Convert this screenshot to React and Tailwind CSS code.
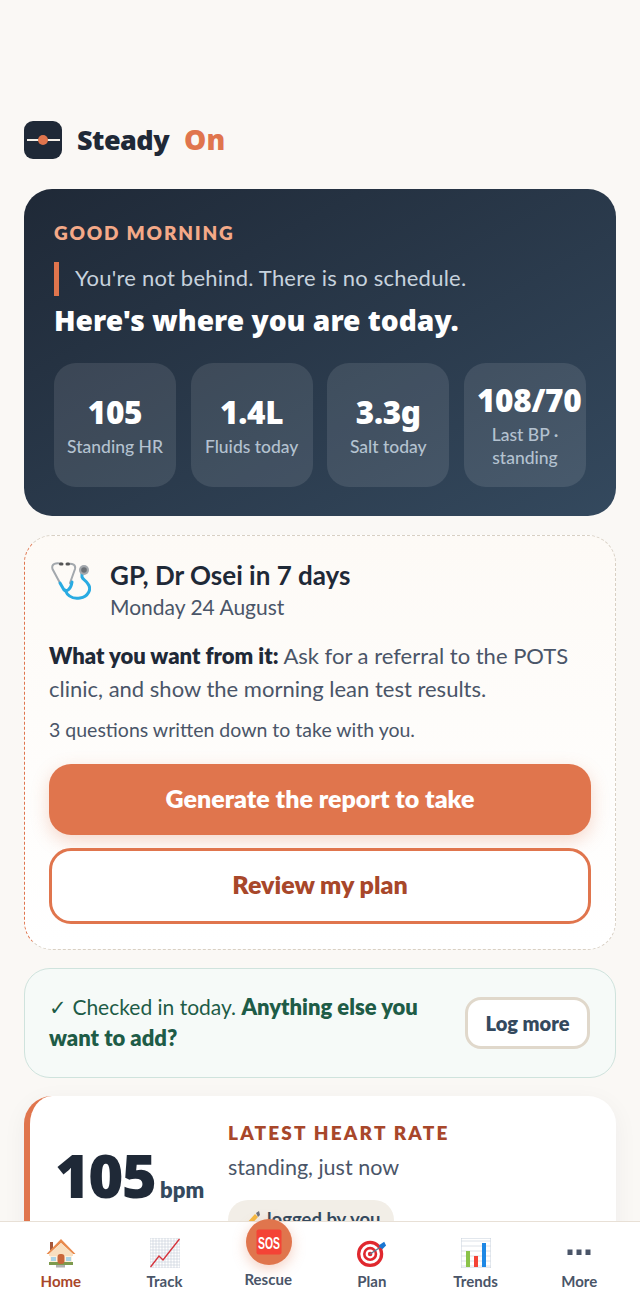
const font = { fontFamily: '"Lato", "Noto Sans", sans-serif' };
const heavy = { fontFamily: '"Noto Sans", "Lato", sans-serif' };

function Stat({ value, label }) {
  return (
    <div className="flex h-[124px] w-[122px] min-w-0 flex-col items-center justify-center rounded-[22px] bg-white/10 px-[13px] text-center">
      <div style={heavy} className="w-full whitespace-nowrap text-left text-[31.5px] font-black leading-[38px] tracking-[-0.01em] text-white">
        <span className="inline-block min-w-full text-center">{value}</span>
      </div>
      <div className="mt-[4px] whitespace-nowrap text-[17.5px] font-medium leading-[23px] text-[#b4c2d0]">{label}</div>
    </div>
  );
}

function Stethoscope() {
  return (
    <svg width="42" height="42" viewBox="-1 0 42 42" fill="none">
      <path d="M12 5 C6 3 1 5 2.5 10 L10 24" stroke="#a3a8ad" strokeWidth="2" strokeLinecap="round" />
      <path d="M17 5 C23 4 26 6 25 10 L20 24" stroke="#a3a8ad" strokeWidth="2" strokeLinecap="round" />
      <path d="M10 24 L14 31 C17 33 21 30 22 23" stroke="#29abe2" strokeWidth="3" strokeLinecap="round" />
      <path d="M15 31 C18 38 24 40 30 39 C38 38 42 30 38 25 C36 21 33 21 32 18 L32 14" stroke="#29abe2" strokeWidth="3" strokeLinecap="round" />
      <rect x="9" y="3.5" width="4.5" height="3" rx="1.5" fill="#555" />
      <rect x="15.5" y="3.5" width="4.5" height="3" rx="1.5" fill="#555" />
      <circle cx="34" cy="11" r="5" fill="#a3a8ad" />
      <circle cx="34" cy="11" r="2.8" fill="#6b7075" />
    </svg>
  );
}

function HomeIcon() {
  return (
    <svg width="30" height="30" viewBox="0 0 30 30">
      <rect x="4" y="4" width="3" height="8" fill="#a5573a" />
      <rect x="4" y="13" width="22" height="12" fill="#fdf0dc" />
      <rect x="3" y="24" width="24" height="3" fill="#7d9a4e" />
      <rect x="10" y="27" width="9" height="2.5" fill="#b0b0b0" />
      <path d="M0.5 16 L15 1 L29.5 16 L27 16 L15 5 L3 16 Z" fill="#e88a4d" />
      <path d="M15 5 L27 16 L27 18 L3 18 L3 16 Z" fill="#f8dfc0" />
      <rect x="11.5" y="16" width="7" height="10" rx="3" fill="#c8663a" />
      <rect x="5" y="19" width="5" height="4" fill="#a9d3e6" />
      <rect x="20" y="19" width="5" height="4" fill="#a9d3e6" />
    </svg>
  );
}

function ChartIcon() {
  const lines = [0, 3, 6, 9, 12, 15, 18, 21, 24, 27, 30];
  return (
    <svg width="30" height="30" viewBox="0 0 30 30">
      <rect width="30" height="30" fill="#fff" />
      {lines.map((n) => (
        <g key={n} stroke="#ccd2dc" strokeWidth="0.7">
          <line x1={n} y1="0" x2={n} y2="30" />
          <line x1="0" y1={n} x2="30" y2={n} />
        </g>
      ))}
      <path d="M0.5 29 L9 18 L13 22 L29.5 1" fill="none" stroke="#d6343c" strokeWidth="1.4" />
    </svg>
  );
}

function SosIcon() {
  return (
    <svg width="26" height="26" viewBox="0 0 26 26">
      <rect x="0.5" y="0.5" width="25" height="25" rx="2" fill="#f44336" />
      <text x="13" y="19.5" textAnchor="middle" fontSize="17" fontWeight="700" fill="#fff" fontFamily="Liberation Sans Narrow, Liberation Sans, sans-serif" textLength="22" lengthAdjust="spacingAndGlyphs">SOS</text>
    </svg>
  );
}

function DartIcon() {
  return (
    <svg width="30" height="30" viewBox="0 0 32 32">
      <circle cx="14" cy="17" r="14" fill="#e0282e" />
      <circle cx="14" cy="17" r="10.5" fill="#fff" />
      <circle cx="14" cy="17" r="7.6" fill="#e0282e" />
      <circle cx="14" cy="17" r="4.8" fill="#fff" />
      <circle cx="14" cy="17" r="2.4" fill="#e0282e" />
      <line x1="14" y1="17" x2="26" y2="9" stroke="#5b7a90" strokeWidth="1.4" />
      <path d="M23 8 L29 4 L31 8 L27 12 Z" fill="#1976d2" />
    </svg>
  );
}

function BarsIcon() {
  const lines = [3, 8, 13, 18, 23, 28];
  return (
    <svg width="30" height="30" viewBox="0 0 30 30">
      <rect width="30" height="30" fill="#fff" stroke="#c6d0dc" strokeWidth="1" />
      {lines.map((n) => (
        <line key={n} x1="0" y1={n} x2="30" y2={n} stroke="#d4dae2" strokeWidth="0.8" />
      ))}
      <rect x="5" y="13" width="4" height="16" fill="#8bc34a" />
      <rect x="13" y="18" width="4" height="11" fill="#f44336" />
      <rect x="21" y="5" width="4" height="24" fill="#1e88e5" />
    </svg>
  );
}

function MoreIcon() {
  return (
    <svg width="30" height="30" viewBox="0 0 30 30" fill="#4a5568">
      <rect x="3.5" y="11.5" width="5" height="5.5" />
      <rect x="12.5" y="11.5" width="5" height="5.5" />
      <rect x="21.5" y="11.5" width="5" height="5.5" />
    </svg>
  );
}

function NavItem({ icon, label, active }) {
  return (
    <div className="flex flex-1 flex-col items-center">
      <div className="flex h-[30px] items-center justify-center">{icon}</div>
      <div className={`mt-[2px] text-[15px] font-bold leading-[22px] ${active ? "text-[#a8472a]" : "text-[#4a5568]"}`}>{label}</div>
    </div>
  );
}

export default function App() {
  return (
    <div style={font} className="relative h-[1310px] w-[640px] overflow-hidden bg-[#faf8f5]">
      <div className="flex flex-col px-6 pt-[121px]">
        <header style={heavy} className="flex h-[38px] items-center">
          <div className="relative flex h-[38px] w-[38px] items-center justify-center rounded-[9px] bg-[#1f2937]">
            <div className="h-[2px] w-[33px] bg-[#f5f0e8]" />
            <div className="absolute h-[10px] w-[10px] rounded-full bg-[#e0754d]" />
          </div>
          <div className="mb-[2px] ml-[15px] text-[27px] font-black leading-none tracking-[-0.02em] text-[#1f2937]">Steady</div>
          <div className="mb-[2px] ml-[15px] text-[28px] font-black leading-none text-[#e0754d]">On</div>
        </header>

        <section className="mt-[30px] h-[327px] rounded-[28px] bg-gradient-to-br from-[#1f2937] to-[#34495e] px-[30px] pt-[30px]">
          <div className="text-[19px] font-extrabold leading-[28px] tracking-[0.095em] text-[#f4a988]">GOOD MORNING</div>
          <div className="mt-[15px] h-[34px] whitespace-nowrap border-l-[5px] border-[#e0754d] pl-[16px] text-[22px] leading-[31px] tracking-[0.01em] text-[#c7d2dd]">You're not behind. There is no schedule.</div>
          <div style={heavy} className="mt-[6px] whitespace-nowrap text-[28.2px] font-black leading-[36px] text-white">Here's where you are today.</div>
          <div className="mt-[25px] flex justify-between">
            <Stat value="105" label="Standing HR" />
            <Stat value="1.4L" label="Fluids today" />
            <Stat value="3.3g" label="Salt today" />
            <Stat value="108/70" label={<>Last BP ·<br />standing</>} />
          </div>
        </section>

        <section className="mt-[19px] h-[415px] rounded-[28px] border border-dashed border-[#d8d0c4] border-l-[#e0754d] bg-gradient-to-b from-[#fdfaf6] to-white px-[24px] pt-[23px]">
          <div className="flex">
            <div className="w-[42px] shrink-0"><Stethoscope /></div>
            <div className="ml-[19px]">
              <div className="whitespace-nowrap text-[26px] font-bold leading-[32px] text-[#1f2937]">GP, Dr Osei in 7 days</div>
              <div className="mt-[1px] text-[21px] leading-[30px] text-[#4a5568]">Monday 24 August</div>
            </div>
          </div>
          <p className="mt-[17px] text-[22px] leading-[33px] text-[#4a5568]">
            <strong className="font-extrabold text-[#1f2937]">What you want from it:</strong> Ask for a referral to the POTS clinic, and show the morning lean test results.
          </p>
          <p className="mt-[11px] text-[19.5px] leading-[28px] text-[#4a5568]">3 questions written down to take with you.</p>
          <div className="mt-[20px] flex h-[71px] items-center justify-center rounded-[22px] bg-[#e0754d] pb-[2px] text-[25px] font-extrabold text-white shadow-[0_6px_18px_rgba(224,117,77,0.28)]">Generate the report to take</div>
          <div className="mt-[13px] flex h-[76px] items-center justify-center rounded-[22px] border-[3px] border-[#e0754d] bg-white pb-[2px] text-[25px] font-extrabold text-[#a8472a]">Review my plan</div>
        </section>

        <section className="mt-[18px] flex h-[110px] items-center justify-between rounded-[26px] border border-[#cfe3dd] bg-[#f6faf8] pl-[24px] pr-[25px]">
          <p className="mb-[2px] w-[385px] text-[21px] leading-[31px] text-[#1e5c47]">
            ✓ Checked in today. <strong className="text-[22px] font-extrabold">Anything else you want to add?</strong>
          </p>
          <div className="ml-[1px] flex h-[52px] w-[125px] items-center justify-center rounded-[16px] border-[3px] border-[#e0d8cb] bg-white text-[20px] font-extrabold text-[#34495e]">Log more</div>
        </section>

        <section className="mt-[18px] flex h-[200px] rounded-[28px] border-l-[6px] border-[#e0754d] bg-white pl-[25px] pt-[24px] shadow-[0_6px_24px_rgba(31,41,55,0.05)]">
          <div className="flex h-[85px] w-[173px] items-baseline pt-[26px]">
            <span style={heavy} className="text-[60px] font-black leading-[58px] tracking-[-0.03em] text-[#1f2937]">105</span>
            <span className="ml-[5px] text-[22px] font-extrabold leading-[26px] text-[#34495e]">bpm</span>
          </div>
          <div>
            <div className="whitespace-nowrap text-[19px] font-extrabold leading-[26px] tracking-[0.115em] text-[#a8472a]">LATEST HEART RATE</div>
            <div className="mt-[6px] text-[21.5px] leading-[30px] text-[#4a5568]">standing, just now</div>
            <div className="mt-[18px] inline-flex h-[40px] items-center whitespace-nowrap rounded-full bg-[#f2eee7] px-[14px] text-[18.5px] font-bold text-[#34495e]">
              <svg width="20" height="20" viewBox="0 0 20 20" className="mr-[5px]">
                <path d="M3 15 L13 4 L16 7 L6 18 Z" fill="#f5b942" />
                <path d="M14 3 L17 1 L18 5 L16 7 Z" fill="#6b7280" />
              </svg>
              logged by you
            </div>
          </div>
        </section>
      </div>

      <nav className="absolute bottom-0 left-0 flex h-[89px] w-full border-t border-[#e8e0d6] bg-white px-[9px] pt-[16px]">
        <NavItem icon={<HomeIcon />} label="Home" active />
        <NavItem icon={<ChartIcon />} label="Track" />
        <div className="flex flex-1 flex-col items-center">
          <div className="-mt-[19px] ml-[1px] flex h-[46px] w-[46px] items-center justify-center rounded-full bg-[#e0754d] shadow-[0_4px_14px_rgba(224,117,77,0.35)]">
            <SosIcon />
          </div>
          <div className="mt-[3px] text-[15px] font-bold leading-[22px] text-[#4a5568]">Rescue</div>
        </div>
        <NavItem icon={<DartIcon />} label="Plan" />
        <NavItem icon={<BarsIcon />} label="Trends" />
        <NavItem icon={<MoreIcon />} label="More" />
      </nav>
    </div>
  );
}
